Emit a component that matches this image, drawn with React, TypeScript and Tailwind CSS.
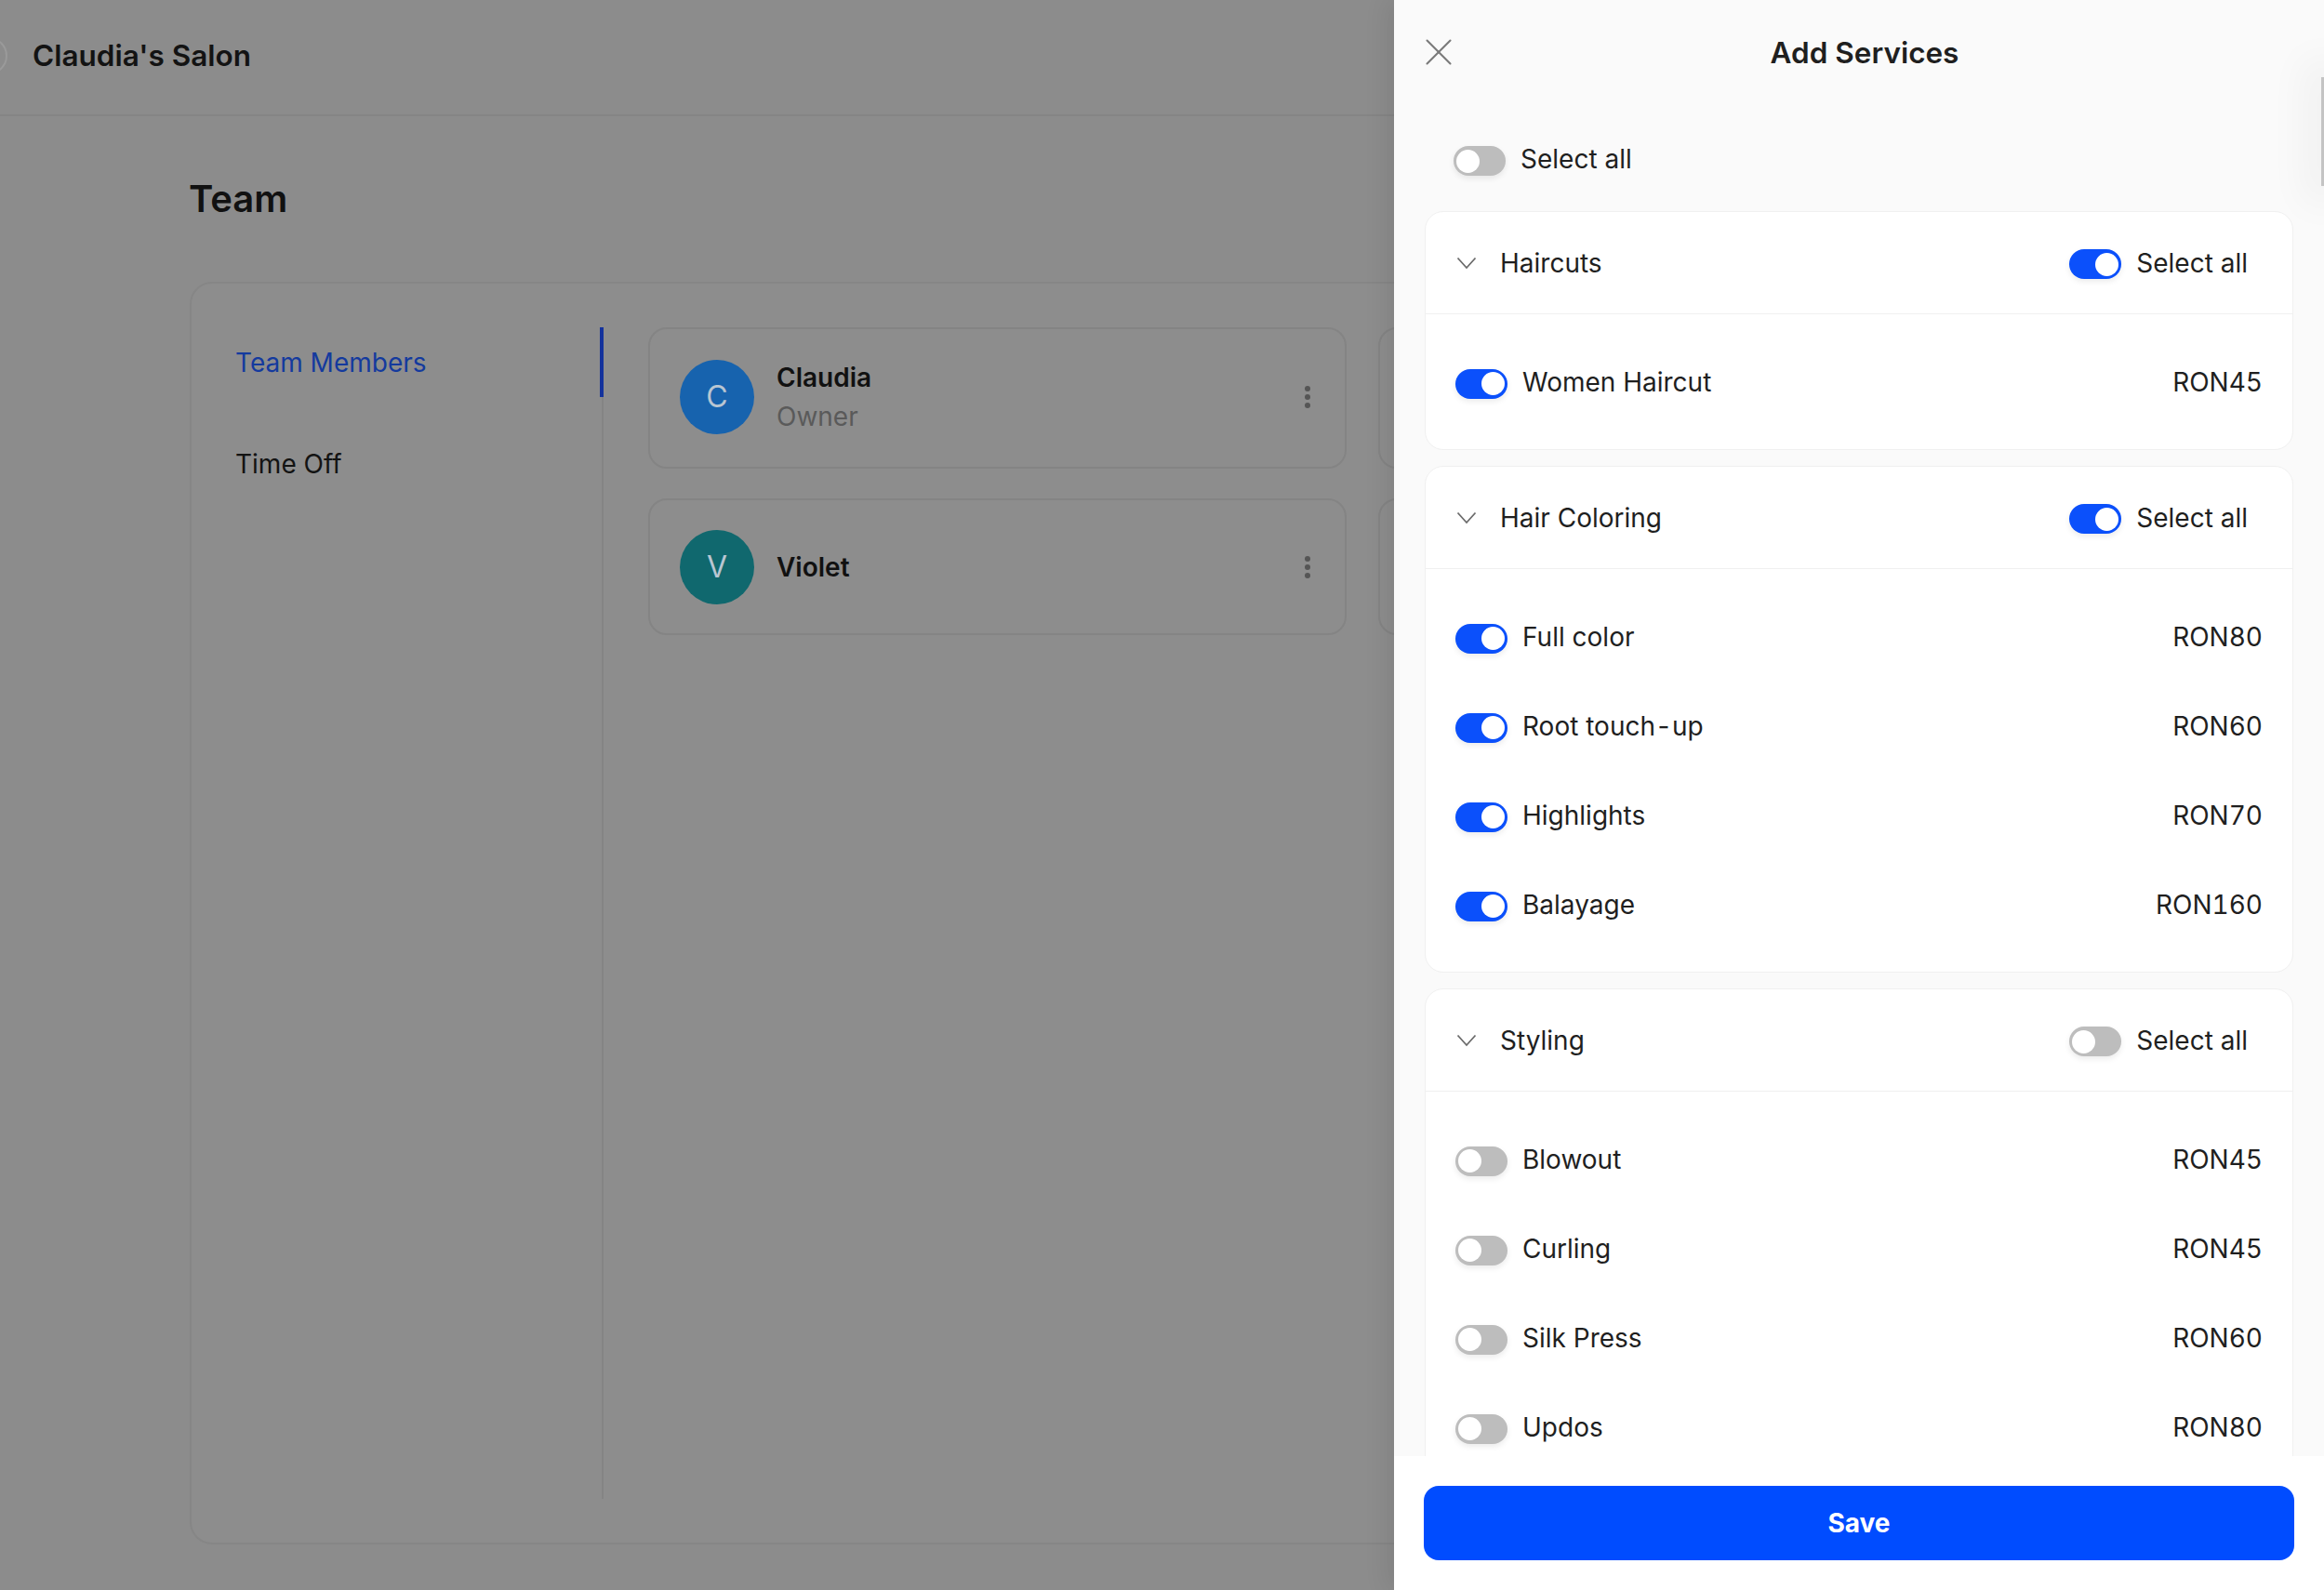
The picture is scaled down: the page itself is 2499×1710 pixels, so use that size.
import type { ReactNode } from "react";
import { X } from "lucide-react";

type Service = { name: ReactNode; price: string };
type Group = { title: string; on: boolean; services: Service[] };

const groups: Group[] = [
    { title: "Haircuts", on: true, services: [{ name: "Women Haircut", price: "RON45" }] },
    {
        title: "Hair Coloring",
        on: true,
        services: [
            { name: "Full color", price: "RON80" },
            { name: <>Root touch<span className="px-[2.5px]">-</span>up</>, price: "RON60" },
            { name: "Highlights", price: "RON70" },
            { name: "Balayage", price: "RON160" },
        ],
    },
    {
        title: "Styling",
        on: false,
        services: [
            { name: "Blowout", price: "RON45" },
            { name: "Curling", price: "RON45" },
            { name: "Silk Press", price: "RON60" },
            { name: "Updos", price: "RON80" },
        ],
    },
];

const Toggle = ({ on }: { on: boolean }) => (
    <div
        className={
            on
                ? "mt-[3px] flex h-8 w-14 shrink-0 items-center justify-end rounded-full bg-[#0b50fb] px-[3px] shadow-[0_3px_6px_rgba(0,0,0,0.08)]"
                : "mt-[3px] flex h-8 w-14 shrink-0 items-center justify-start rounded-full bg-[#bdbdbd] px-[3px] shadow-[0_3px_6px_rgba(0,0,0,0.08)]"
        }
    >
        <div className="size-[25px] rounded-full bg-white" />
    </div>
);

const Dots = () => (
    <div className="-ml-[1px] flex flex-col gap-[3px] pr-[1px]">
        <div className="size-[6px] rounded-full bg-[#555555]" />
        <div className="size-[6px] rounded-full bg-[#555555]" />
        <div className="size-[6px] rounded-full bg-[#555555]" />
    </div>
);

const MemberCard = ({ initial, name, role, color }: { initial: string; name: string; role?: string; color: string }) => (
    <div className={`flex w-[751px] items-center rounded-[20px] border-2 border-[#848484] pr-[36px] pl-[32px] ${role ? "h-[152px] pb-[2px]" : "h-[147px]"}`}>
        <div className={`flex size-[80px] shrink-0 items-center justify-center rounded-full text-[32px] text-[#b9c6d2] ${color}`}>
            {initial}
        </div>
        <div className="ml-[24px] flex flex-1 flex-col gap-[8px]">
            <div className="text-[28px] leading-[34px] font-semibold text-[#111111]">{name}</div>
            {role && <div className="text-[28px] leading-[34px] text-[#5a5a5a]">{role}</div>}
        </div>
        <Dots />
    </div>
);

const ServiceCard = ({ group }: { group: Group }) => (
    <div className="shrink-0 rounded-[20px] border border-[#f0f0f0] bg-white">
        <div className="flex h-[109px] items-center pr-[48px] pl-[33px]">
            <svg width="22" height="14" viewBox="0 0 22 14" fill="none" stroke="#6b6b6b" strokeWidth="1.8">
                <polyline points="1.5,1.5 11,12 20.5,1.5" />
            </svg>
            <div className="ml-[25px] flex-1 text-[28px] text-[#1f1f1f]">{group.title}</div>
            <Toggle on={group.on} />
            <div className="ml-[16px] text-[28px] text-[#1f1f1f]">Select all</div>
        </div>
        <div className="border-t border-[#f0f0f0] pt-[25px] pb-6">
            {group.services.map((s) => (
                <div key={s.price + String(s.name)} className="flex h-24 items-center pr-[32px] pl-[32px]">
                    <Toggle on={group.on} />
                    <div className="ml-[16px] flex-1 text-[28px] text-[#1f1f1f]">{s.name}</div>
                    <div className="text-[28px] text-[#1f1f1f] tabular-nums">{s.price}</div>
                </div>
            ))}
        </div>
    </div>
);

const App = () => {
    return (
        <div className="relative h-[1710px] w-full overflow-hidden bg-[#8c8c8c] font-['Inter',sans-serif]">
            <div className="flex h-[125px] items-center border-b-2 border-[#858585] pb-[3px]">
                <div className="-ml-[32px] size-10 rounded-full border-2 border-[#9a9a9a]" />
                <div className="ml-[27px] text-[31.5px] font-semibold text-[#131313]">Claudia's Salon</div>
            </div>

            <div className="pl-[204px]">
                <h1 className="mt-[60px] -ml-[1px] text-[40px] leading-[58px] font-semibold text-[#111111]">Team</h1>
                <div className="mt-[60px] flex h-[1358px] w-[1900px] rounded-[24px] border-2 border-[#868686] bg-[#8d8d8d]">
                    <div className="mt-[47px] mb-[47px] w-[443px] shrink-0 border-r-2 border-[#848484]">
                        <div className="flex h-[75px] items-center justify-between pl-[47px] text-[28px] text-[#143a9e]">
                            Team Members
                            <div className="-mr-[2px] h-[75px] w-[4px] bg-[#14329c]" />
                        </div>
                        <div className="mt-[34px] flex h-[75px] items-center pl-[47px] text-[28px] text-[#131313]">Time Off</div>
                    </div>
                    <div className="mt-[47px] ml-[48px] grid grid-cols-[751px_751px] content-start gap-x-[34px] gap-y-[32px]">
                        <MemberCard initial="C" name="Claudia" role="Owner" color="bg-[#1763ae]" />
                        <div className="h-[152px] w-[751px] rounded-[20px] border-2 border-[#848484]" />
                        <MemberCard initial="V" name="Violet" color="bg-[#10686e]" />
                        <div className="h-[147px] w-[751px] rounded-[20px] border-2 border-[#848484]" />
                    </div>
                </div>
            </div>

            {/* drawer */}
            <div className="absolute top-0 right-0 bottom-0 flex w-[1000px] flex-col bg-[#fafafa] shadow-[-8px_0_24px_rgba(0,0,0,0.08)]">
                <div className="relative flex h-[112px] shrink-0 items-center justify-center">
                    <X className="absolute top-[31px] left-[23px] text-[#7a7a7a]" size={50} strokeWidth={1} />
                    <div className="mt-[2px] ml-[12px] text-[31.5px] font-semibold text-[#1f1f1f]">Add Services</div>
                </div>
                <div className="flex flex-1 flex-col gap-[17px] overflow-hidden px-[33px]">
                    <div className="flex items-center pt-[42px] pb-[21px] pl-[31px]">
                        <Toggle on={false} />
                        <div className="ml-[16px] pb-[2px] text-[28px] leading-[32px] text-[#1f1f1f]">Select all</div>
                    </div>
                    {groups.map((g) => (
                        <ServiceCard key={g.title} group={g} />
                    ))}
                </div>
                <div className="h-[144px] shrink-0 bg-white px-[32px] pt-[32px]">
                    <div className="flex h-20 items-center justify-center rounded-[16px] bg-[#004cff] text-[28px] font-bold text-white">
                        Save
                    </div>
                </div>
                <div className="absolute top-[83px] right-0 h-[117px] w-[3px] bg-[#c4c4c4] shadow-[0_0_40px_20px_rgba(0,0,0,0.04)]" />
            </div>
        </div>
    );
};

export default App;
